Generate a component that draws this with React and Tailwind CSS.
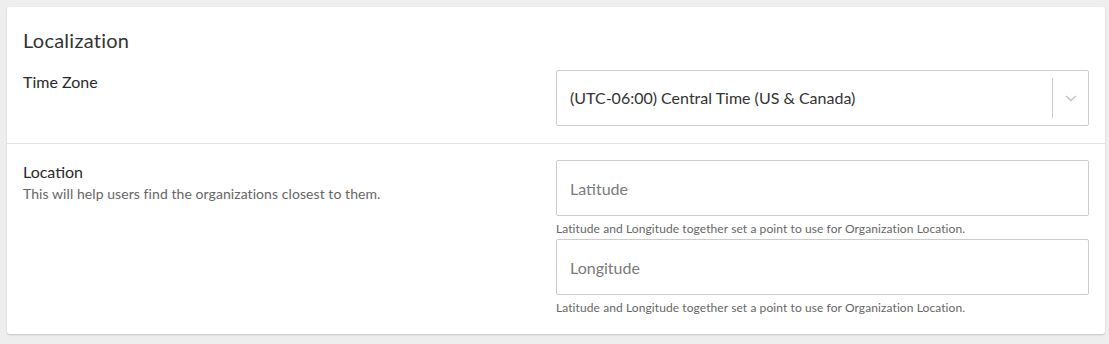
import React from "react";

// field helper copy shared by both coordinate inputs
const coordHelp =
  "Latitude and Longitude together set a point to use for Organization Location.";

function ChevronDown() {
  return (
    <svg width="12" height="7" viewBox="0 0 12 7" fill="none" className="block">
      <path d="M1 1l5 4.5L11 1" stroke="#c4c4c4" strokeWidth="1.6" />
    </svg>
  );
}

function TimeZoneSelect({ value }) {
  return (
    <div className="flex h-14 items-center rounded-[2px] border border-[#cccccc] bg-white">
      <div className="flex-1 truncate pl-[13px] text-[16px] text-[#333333]">{value}</div>
      <div className="flex h-full items-center">
        <span className="my-2 block h-[40px] w-px bg-[#cccccc]" />
        <div className="flex w-[35px] items-center justify-center">
          <ChevronDown />
        </div>
      </div>
    </div>
  );
}

function CoordInput({ placeholder }) {
  return (
    <div>
      <input
        placeholder={placeholder}
        className="block h-14 w-full rounded-[2px] border border-[#cccccc] bg-white px-[13px] text-[16px] text-[#333333] outline-none placeholder:text-[#7a7a7a]"
      />
      <p className="mt-[5px] mb-[2px] text-[12px] leading-4 tracking-[0.09px] text-[#666666]">
        {coordHelp}
      </p>
    </div>
  );
}

export default function App() {
  return (
    <div
      className="min-h-[344px] w-full bg-[#eeeeee] pt-[7px] pl-[7px]"
      style={{ fontFamily: "Lato, 'Open Sans', Arial, sans-serif" }}
    >
      <div className="w-[1098px] rounded-[3px] bg-white shadow-[0_1px_2px_rgba(0,0,0,0.18)]">
        {/* time zone */}
        <section className="border-b border-[#e2e2e2] px-4 pt-[21px] pb-[17px]">
          <h2 className="mb-[18px] text-[20px] leading-6 tracking-[0.25px] text-[#333333]">
            Localization
          </h2>
          <div className="grid grid-cols-2">
            <div className="text-[16px] leading-6 text-[#2a2a2a]">Time Zone</div>
            <TimeZoneSelect value="(UTC-06:00) Central Time (US & Canada)" />
          </div>
        </section>

        {/* location */}
        <section className="grid grid-cols-2 px-4 pt-4 pb-4">
          <div>
            <div className="text-[16px] leading-6 text-[#2a2a2a]">Location</div>
            <p className="text-[14px] leading-5 tracking-[0.07px] text-[#666666]">
              This will help users find the organizations closest to them.
            </p>
          </div>
          <div>
            <CoordInput placeholder="Latitude" />
            <CoordInput placeholder="Longitude" />
          </div>
        </section>
      </div>
    </div>
  );
}
